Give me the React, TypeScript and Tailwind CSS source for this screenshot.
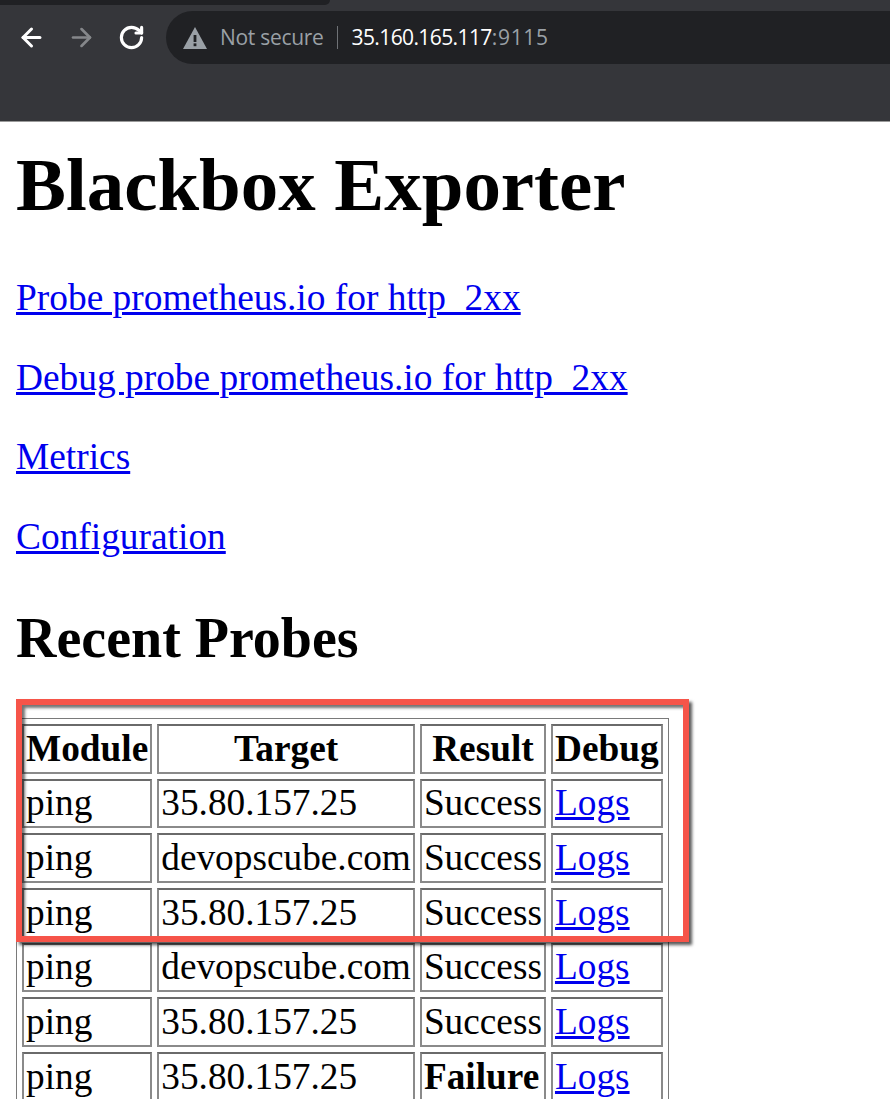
import { ArrowLeft, ArrowRight, RotateCw } from "lucide-react";

const rows: [string, string, boolean][] = [
  ["ping", "35.80.157.25", false],
  ["ping", "devopscube.com", false],
  ["ping", "35.80.157.25", false],
  ["ping", "devopscube.com", false],
  ["ping", "35.80.157.25", false],
  ["ping", "35.80.157.25", true],
];

const cell = "border-2 border-[#8a8a8a] border-t-[#6a6a6a] px-[2px] py-0 h-[49.67px] leading-[44px] whitespace-nowrap";

function Toolbar() {
  return (
    <div className="h-[122px] bg-[#35363a] border-b border-[#9a9a9a] flex flex-col">
      <div className="h-[5px] w-[330px] bg-[#202124] rounded-br-lg" />
      <div className="flex items-center h-[53px] mt-[6px] pl-[17px]">
        <ArrowLeft size={29} strokeWidth={2.5} className="text-white" />
        <ArrowRight size={29} strokeWidth={2.2} className="text-[#85878a] ml-[21px]" />
        <RotateCw size={27} strokeWidth={2.8} className="text-white ml-[22px]" />
        <div className="ml-[21px] flex-1 h-[53px] bg-[#202124] rounded-l-[27px] flex items-center pl-[17px] font-['Open_Sans',sans-serif] text-[21px]">
          <svg width="24" height="22" viewBox="0 0 24 22" className="shrink-0">
            <path d="M12 0 L24 22 H0 Z" fill="#9aa0a6" />
            <rect x="10.6" y="8" width="2.8" height="7" fill="#202124" />
            <rect x="10.6" y="16.4" width="2.8" height="2.8" fill="#202124" />
          </svg>
          <span className="ml-[13px] text-[#9aa0a6] tracking-[-0.3px]">Not secure</span>
          <span className="ml-[13px] w-px h-[23px] bg-[#6f7276]" />
          <span className="ml-[14px] text-white font-medium tracking-[-0.6px]">35.160.165.117</span>
          <span className="text-[#9aa0a6] tracking-[0.7px]">:9115</span>
        </div>
      </div>
    </div>
  );
}

export default function App() {
  return (
    <div className="relative h-[1099px] overflow-hidden bg-white text-black font-['Liberation_Serif',serif] text-[37.4px]">
      <Toolbar />
      <div className="px-[16px]">
        <h1 className="text-[74.9px] font-bold leading-[84px] mt-[21px]">Blackbox Exporter</h1>
        <div className="mt-[50px] flex flex-col gap-[37px] items-start leading-[42.5px]">
          <a href="#" className="text-[#0000ee] underline">Probe prometheus.io for http_2xx</a>
          <a href="#" className="text-[#0000ee] underline">Debug probe prometheus.io for http_2xx</a>
          <a href="#" className="text-[#0000ee] underline">Metrics</a>
          <a href="#" className="text-[#0000ee] underline">Configuration</a>
        </div>
        <h2 className="text-[56px] font-bold leading-[63px] mt-[49px]">Recent Probes</h2>
        <table className="mt-[48px] border border-[#7a7a7a] border-separate border-spacing-[5px] text-[37.3px]">
          <thead>
            <tr>
              <th className={cell}>Module</th>
              <th className={cell}>Target</th>
              <th className={cell}>Result</th>
              <th className={cell}>Debug</th>
            </tr>
          </thead>
          <tbody>
            {rows.map(([m, t, fail], i) => (
              <tr key={i}>
                <td className={cell}>{m}</td>
                <td className={cell}>{t}</td>
                <td className={cell + (fail ? " font-bold" : "")}>{fail ? "Failure" : "Success"}</td>
                <td className={cell}>
                  <a href="#" className="text-[#0000ee] underline">Logs</a>
                </td>
              </tr>
            ))}
          </tbody>
        </table>
      </div>
      <div className="absolute left-[16px] top-[699px] w-[673px] h-[243px] border-[6px] border-[#f65449] shadow-[3px_3px_3px_rgba(0,0,0,0.65),inset_3px_3px_3px_rgba(0,0,0,0.55)]" />
    </div>
  );
}
